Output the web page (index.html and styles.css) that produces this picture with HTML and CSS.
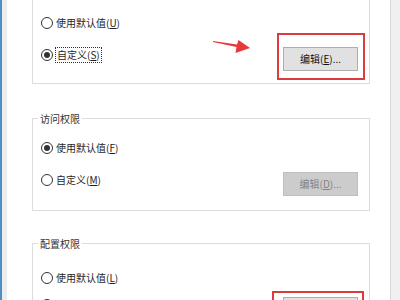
FILE: index.html
```html
<!DOCTYPE html>
<html lang="zh-CN">
<head>
<meta charset="utf-8">
<link rel="stylesheet" href="styles.css">
</head>
<body>
<div class="window">
  <div class="edge"></div>
  <div class="main">
    <fieldset class="group g1">
      <div class="opt"><span class="radio"></span><span>使用默认值(<u>U</u>)</span></div>
      <div class="row">
        <div class="opt"><span class="radio on"></span><span class="focus">自定义(<u>S</u>)</span></div>
        <div class="mark m1">
          <svg class="arrow" width="42" height="18" viewBox="0 0 42 18"><polygon points="3,5 27,8.5 28.5,4 40,12 25.5,17 26.5,11 3,6" fill="#e8383a"/></svg>
          <button class="btn" type="button">编辑(<u>E</u>)...</button>
        </div>
      </div>
    </fieldset>
    <fieldset class="group g2">
      <legend>访问权限</legend>
      <div class="opt"><span class="radio on"></span><span>使用默认值(<u>F</u>)</span></div>
      <div class="row">
        <div class="opt"><span class="radio"></span><span>自定义(<u>M</u>)</span></div>
        <button class="btn" type="button" disabled>编辑(<u>D</u>)...</button>
      </div>
    </fieldset>
    <fieldset class="group g3">
      <legend>配置权限</legend>
      <div class="opt"><span class="radio"></span><span>使用默认值(<u>L</u>)</span></div>
      <div class="row">
        <div class="opt"><span class="radio"></span><span>自定义(<u>N</u>)</span></div>
        <div class="mark m3">
          <button class="btn" type="button">编辑(<u>I</u>)...</button>
        </div>
      </div>
    </fieldset>
  </div>
  <div class="side"></div>
</div>
</body>
</html>
```

FILE: styles.css
```css
* { box-sizing: border-box; }
html, body {
  margin: 0;
  height: 300px;
  overflow: hidden;
  background: #fff;
}
body {
  font-family: "Noto Sans CJK SC", "Noto Sans", sans-serif;
  font-size: 10px;
  color: #1e1e1e;
}
.window {
  display: flex;
  height: 300px;
}
.edge {
  width: 7px;
  flex: none;
  border-left: 2px solid #4b8fc5;
  background: #ececec;
}
.main {
  width: 383px;
  flex: none;
  padding-left: 25px;
  display: flex;
  flex-direction: column;
  align-items: flex-start;
}
.side {
  flex: 1;
  border-left: 1px solid #d9d9d9;
  background: #f0f0f0;
}
.group {
  margin: 0;
  width: 338px;
  min-inline-size: 0;
  border: 1px solid #dcdcdc;
  padding: 0 11px 0 8px;
  display: flex;
  flex-direction: column;
  gap: 16px;
}
.group legend {
  padding: 0 2px;
  margin-left: -3px;
  line-height: 17px;
  color: #333;
}
.g1 {
  margin-top: -10px;
  padding-top: 24px;
  padding-bottom: 12px;
}
.g2 {
  margin-top: 26px;
  padding-top: 13px;
  padding-bottom: 14px;
}
.g3 {
  margin-top: 24px;
  padding-top: 18px;
  gap: 11px;
}
.opt {
  display: flex;
  align-items: center;
  height: 16px;
  line-height: 16px;
  white-space: nowrap;
}
.radio {
  width: 12px;
  height: 12px;
  flex: none;
  border: 1px solid #333;
  border-radius: 50%;
  margin-right: 3px;
  display: flex;
  align-items: center;
  justify-content: center;
  background: #fff;
}
.radio.on::after {
  content: "";
  width: 6px;
  height: 6px;
  border-radius: 50%;
  background: #333;
}
.focus {
  display: inline-block;
  line-height: 14px;
  padding: 0 1px;
  outline: 1px dotted #333;
}
.row {
  display: flex;
  justify-content: space-between;
  align-items: flex-start;
}
.btn {
  width: 75px;
  height: 24px;
  padding: 0;
  margin: 0;
  background: #e1e1e1;
  border: 1px solid #adadad;
  border-radius: 0;
  font: inherit;
  line-height: 22px;
  color: #111;
  text-align: center;
}
.btn:disabled {
  background: #cccccc;
  border-color: #bfbfbf;
  color: #838383;
}
.mark {
  position: relative;
  display: flex;
}
.mark::after {
  content: "";
  position: absolute;
  border: 2px solid #dc3c3e;
  pointer-events: none;
}
.m1::after {
  inset: -14px -7px -9px -6px;
}
.m3::after {
  inset: -6px -6px -9px -11px;
}
.arrow {
  position: absolute;
  left: -73px;
  top: -11px;
}
```
